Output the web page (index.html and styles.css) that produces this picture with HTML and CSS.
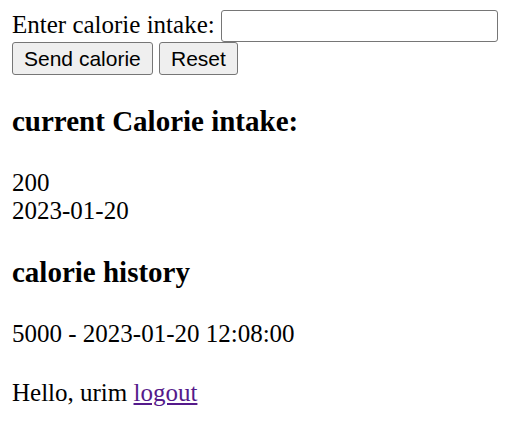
FILE: index.html
```html
<!DOCTYPE html>
<html>
<head>
<meta charset="utf-8">
<link rel="stylesheet" href="styles.css">
</head>
<body>
<form class="calorie-form">
  <label class="label" for="cal">Enter calorie intake:</label>
  <input class="text-input" id="cal" type="text"><br>
  <button class="btn" type="button">Send calorie</button>
  <button class="btn" type="button">Reset</button>
</form>
<h3 class="heading">current Calorie intake:</h3>
<p class="para">200<br>2023-01-20</p>
<h3 class="heading">calorie history</h3>
<p class="para">5000 - 2023-01-20 12:08:00</p>
<p class="para">Hello, urim <a class="link" href="#">logout</a></p>
</body>
</html>
```
FILE: styles.css
```css
html { background: #fff; }
body {
  margin: 10px 12px;
  font-family: "Liberation Serif", "Times New Roman", serif;
  font-size: 25px;
  line-height: 28px;
  color: #000;
}
.calorie-form { margin: 0; }
.text-input {
  box-sizing: border-box;
  width: 277px;
  height: 32px;
  border: 1px solid #767676;
  border-radius: 3px;
  padding: 1px 3px;
  font-family: "Liberation Sans", Arial, sans-serif;
  font-size: 20px;
  vertical-align: baseline;
}
.btn {
  box-sizing: border-box;
  height: 33px;
  border: 1px solid #767676;
  border-radius: 3px;
  background: #efefef;
  color: #000;
  font-family: "Liberation Sans", Arial, sans-serif;
  font-size: 21px;
  padding: 1px 11px;
  margin: 0;
}
.heading {
  font-size: 29px;
  line-height: 33px;
  font-weight: bold;
  margin: 30px 0 31px;
}
.para { margin: 31px 0; }
.link { color: #551a8b; }
```
